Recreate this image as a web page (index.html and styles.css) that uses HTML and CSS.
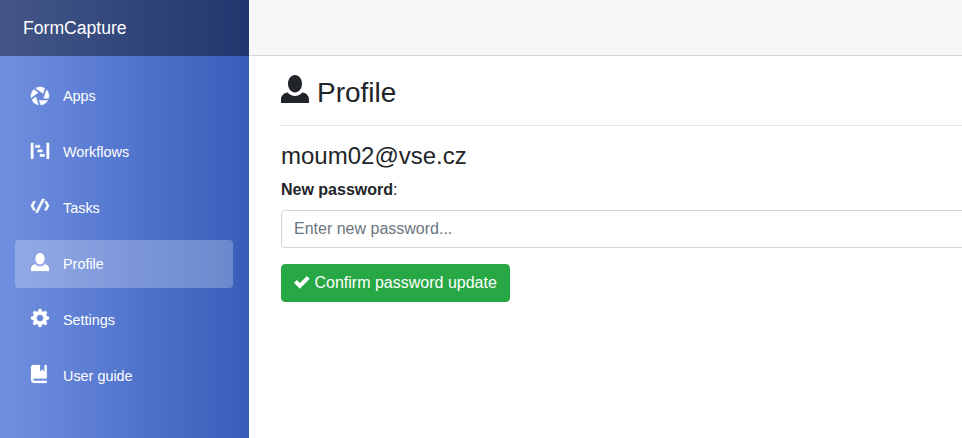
FILE: index.html
```html
<!DOCTYPE html>
<html lang="en">
<head>
<meta charset="utf-8">
<title>FormCapture</title>
<link rel="stylesheet" href="styles.css">
</head>
<body>
<aside class="sidebar">
  <a class="brand">FormCapture</a>
  <nav class="nav">
    <a class="nav-item"><svg class="icon low" viewBox="0 0 8 8"><path d="M4 0c-.69 0-1.34.19-1.91.5l3.22 2.34.75-2.25c-.6-.36-1.31-.59-2.06-.59zm-2.75 1.13c-.76.73-1.25 1.74-1.25 2.88 0 .25.02.48.06.72l3.09-2.22-1.91-1.38zm5.63.13l-1.22 3.75h2.19c.08-.32.13-.65.13-1 0-1.07-.44-2.03-1.13-2.75zm-4.72 3.22l-1.75 1.25c.55 1.13 1.6 1.99 2.88 2.22l-1.13-3.47zm1.56 1.53l.63 1.97c1.33-.12 2.46-.88 3.09-1.97h-3.72z"/></svg>Apps</a>
    <a class="nav-item"><svg class="icon low" viewBox="0 0 8 8"><path d="M0 0v7h1v-7h-1zm7 0v7h1v-7h-1zm-5 1v1h2v-1h-2zm1 2v1h2v-1h-2zm1 2v1h2v-1h-2z"/></svg>Workflows</a>
    <a class="nav-item"><svg class="icon low" viewBox="0 0 8 8"><path d="M5 0l-3 6h1l3-6h-1zm-4 1l-1 2 1 2h1l-1-2 1-2h-1zm5 0l1 2-1 2h1l1-2-1-2h-1z"/></svg>Tasks</a>
    <a class="nav-item active"><svg class="icon" viewBox="0 0 8 8"><path d="M4 0c-1.1 0-2 1.12-2 2.5s.9 2.5 2 2.5 2-1.12 2-2.5-.9-2.5-2-2.5zm-2.09 5c-1.06.05-1.91.92-1.91 2v1h8v-1c0-1.08-.84-1.95-1.91-2-.54.61-1.28 1-2.09 1-.81 0-1.55-.39-2.09-1z"/></svg>Profile</a>
    <a class="nav-item"><svg class="icon" viewBox="0 0 8 8"><path d="M3.5 0l-.5 1.19-.31.13-1.19-.5-.69.69.5 1.19-.13.31-1.19.5v1l1.19.5.13.31-.5 1.19.69.69 1.19-.5.31.13.5 1.19h1l.5-1.19.31-.13 1.19.5.69-.69-.5-1.19.13-.31 1.19-.5v-1l-1.19-.5-.13-.31.5-1.19-.69-.69-1.19.5-.31-.13-.5-1.19h-1zm.5 2.5c.83 0 1.5.67 1.5 1.5s-.67 1.5-1.5 1.5-1.5-.67-1.5-1.5.67-1.5 1.5-1.5z"/></svg>Settings</a>
    <a class="nav-item"><svg class="icon" viewBox="0 0 8 8"><path d="M1 0c-.07 0-.13.01-.19.03-.39.08-.7.39-.78.78-.03.06-.03.12-.03.19v5.5c0 .83.67 1.5 1.5 1.5h5.5v-1h-5.5c-.28 0-.5-.22-.5-.5s.22-.5.5-.5h5.5v-5.5c0-.28-.22-.5-.5-.5h-.5v3l-1-1-1 1v-3h-3z"/></svg>User guide</a>
  </nav>
</aside>
<main class="main">
  <div class="topbar"></div>
  <section class="content">
    <h3 class="title"><svg class="title-icon" viewBox="0 0 8 8"><path d="M4 0c-1.1 0-2 1.12-2 2.5s.9 2.5 2 2.5 2-1.12 2-2.5-.9-2.5-2-2.5zm-2.09 5c-1.06.05-1.91.92-1.91 2v1h8v-1c0-1.08-.84-1.95-1.91-2-.54.61-1.28 1-2.09 1-.81 0-1.55-.39-2.09-1z"/></svg>Profile</h3>
    <hr class="rule">
    <h4 class="account">moum02@vse.cz</h4>
    <div class="label"><b>New password</b>:</div>
    <input class="field" type="password" placeholder="Enter new password...">
    <button class="confirm"><svg class="check" viewBox="0 0 8 8"><path transform="translate(0 1)" d="M6.41 0l-.69.72-2.78 2.78-.81-.78-.72-.72-1.41 1.41.72.72 1.5 1.5.69.72.72-.72 3.5-3.5.72-.72-1.44-1.41z"/></svg>Confirm password update</button>
  </section>
</main>
</body>
</html>
```
FILE: styles.css
```css
* { box-sizing: border-box; }
body {
  margin: 0;
  height: 100vh;
  display: flex;
  overflow: hidden;
  font: 16px/24px "Liberation Sans", Arial, sans-serif;
  color: #212529;
  background: #fff;
}
svg { fill: currentColor; flex: none; }
.sidebar {
  flex: none;
  width: 249px;
  color: #fff;
  background: linear-gradient(90deg, #7290e0 0%, #4d71ca 60%, #395cb8 100%);
}
.brand {
  display: flex;
  align-items: center;
  height: 56px;
  padding-left: 23px;
  font-size: 17.6px;
  background: rgba(0, 0, 0, .4);
}
.nav {
  display: flex;
  flex-direction: column;
  gap: 8px;
  padding: 16px 16px 0 15px;
}
.nav-item {
  display: flex;
  height: 48px;
  padding-left: 16px;
  gap: 14px;
  font-size: 14.4px;
  line-height: 48px;
  border-radius: 4px;
}
.active { background: rgba(255, 255, 255, .25); }
.icon {
  width: 18px;
  height: 18px;
  margin-top: 13px;
  overflow: visible;
  stroke: currentColor;
  stroke-width: .1;
}
.low { margin-top: 15px; stroke-width: .22; }
.main { flex: 1; min-width: 0; }
.topbar {
  height: 56px;
  background: #f7f7f7;
  border-bottom: 1px solid #d6d5d5;
}
.content { width: 760px; padding: 18px 0 0 32px; }
.title {
  display: flex;
  gap: 8px;
  margin: 0;
  height: 35px;
  font-size: 28px;
  font-weight: 400;
  line-height: 38px;
}
.title-icon { width: 28px; height: 28px; margin-top: 1px; }
.rule {
  margin: 16px 0;
  border: 0;
  border-top: 1px solid rgba(0, 0, 0, .1);
}
.account {
  margin: 0 0 9px;
  font-size: 24px;
  font-weight: 400;
  line-height: 27px;
}
.label { margin-bottom: 8px; }
.field {
  display: block;
  width: 100%;
  height: 38px;
  padding: 6px 12px;
  font: inherit;
  border: 1px solid #ced4da;
  border-radius: 4px;
}
.field::placeholder { color: #6c757d; opacity: 1; }
.confirm {
  display: flex;
  gap: 4.5px;
  width: 229px;
  height: 38px;
  margin-top: 16px;
  padding: 6px 12px;
  font: inherit;
  color: #fff;
  white-space: nowrap;
  background: #28a745;
  border: 1px solid #28a745;
  border-radius: 4px;
}
.check { width: 16px; height: 16px; margin-top: 3px; }
```
